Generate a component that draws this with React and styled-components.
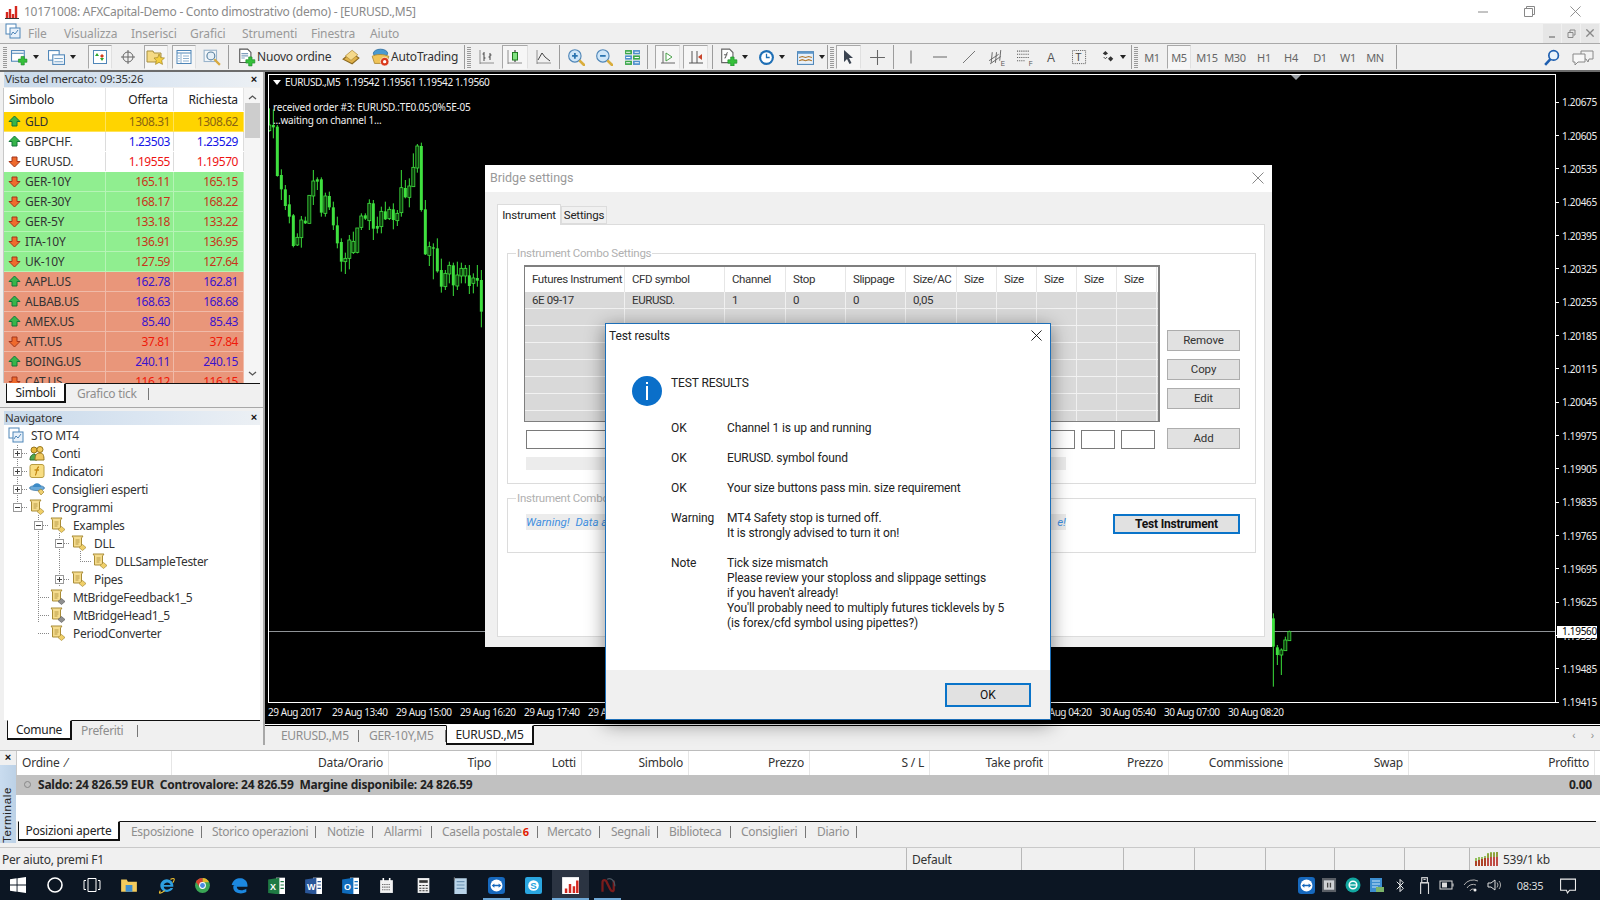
import React from "react";
import styled, { createGlobalStyle } from "styled-components";

const UI = `"Noto Sans", "Liberation Sans", sans-serif`;
const NARROW = `Roboto, "Liberation Sans", sans-serif`;

const GlobalStyle = createGlobalStyle`
  html, body { margin: 0; padding: 0; width: 1600px; height: 900px; overflow: hidden; background: #f0f0f0; }
  * { box-sizing: border-box; }
`;

const App = styled.div`
  position: relative; width: 1600px; height: 900px; overflow: hidden;
  display: flex; flex-direction: column; background: #f0f0f0;
  font-family: ${UI}; font-size: 12px; color: #222;
`;

/* ---------- title + menu ---------- */
const TitleBar = styled.div`
  height: 23px; flex: none; background: #fff; display: flex; align-items: center; padding: 0 2px 0 5px;
`;
const TitleText = styled.div`
  margin-left: 5px; font-size: 12px; color: #8a8a8a; flex: 1; white-space: nowrap; letter-spacing: -.25px;
`;
const WinCtl = styled.div`
  width: 46px; height: 23px; display: flex; align-items: center; justify-content: center; color: #8a8a8a;
`;
const MenuBar = styled.div`
  height: 20px; flex: none; background: #f0f0f0; display: flex; align-items: center; padding-left: 5px; color: #999;
`;
const MenuItem = styled.span`
  width: ${p => p.$w}px; flex: none; font-size: 12px; white-space: nowrap; letter-spacing: -.1px;
`;
const MdiGroup = styled.div`
  margin-left: auto; margin-right: 1px; display: flex; gap: 1px;
`;
const MdiBtn = styled.div`
  width: 18px; height: 19px; background: #e6e6e6; display: flex; align-items: center; justify-content: center; color: #888;
`;

/* ---------- toolbar ---------- */
const Toolbar = styled.div`
  height: 29px; flex: none; display: flex; align-items: center; background: #f0f0f0;
  border-top: 1px solid #a9a9a9; border-bottom: 2px solid #6c6c6c;
`;
const Tool = styled.div`
  width: ${p => p.$w}px; margin-left: ${p => p.$m || 0}px; height: 24px; flex: none;
  display: flex; align-items: center; justify-content: center;
  border: 1px solid ${p => (p.$on ? "#a8a8a8" : "transparent")};
  border-bottom-color: ${p => (p.$on ? "#f7f7f7" : "transparent")};
  border-right-color: ${p => (p.$on ? "#e0e0e0" : "transparent")};
  background: ${p => (p.$on ? "#f6f6f6" : "transparent")};
  font-size: 12px; color: #555; white-space: nowrap;
`;
const ToolLabel = styled.div`
  width: ${p => p.$w}px; flex: none; font-size: 12px; color: #333; white-space: nowrap; letter-spacing: -.2px; padding-bottom: 1px;
`;
const ToolSep = styled.div`
  width: 1px; height: 24px; background: #9c9c9c; flex: none; margin-left: ${p => p.$m || 0}px;
`;
const Grip = styled.div`
  width: 4px; height: 21px; flex: none; margin-left: ${p => p.$m || 0}px;
  background-image: repeating-linear-gradient(to bottom, #9a9a9a 0 1px, transparent 1px 2px);
`;
const Caret = styled.div`
  width: ${p => p.$w}px; flex: none; display: flex; justify-content: center;
  &::after { content: ""; border: 3px solid transparent; border-top: 4px solid #222; border-bottom: 0; }
`;
const ToolRight = styled.div`
  margin-left: auto; display: flex; align-items: center; gap: 12px; padding-right: 6px;
`;
const TfBtn = styled(Tool)`
  font-size: 11px; color: #666; letter-spacing: -.3px;
`;

/* ---------- main ---------- */
const Main = styled.div`
  height: 673px; flex: none; display: flex;
`;
const LeftPanel = styled.div`
  width: 265px; flex: none; background: #f0f0f0; display: flex; flex-direction: column; border-right: 2px solid #a8a8a8;
`;
const PaneTitle = styled.div`
  height: ${p => p.$h}px; margin-left: 4px; margin-right: 3px; display: flex; align-items: center; justify-content: space-between;
  padding: 0 3px 2px 1px; font-size: 11.5px; color: #333; letter-spacing: -.25px;
  background: linear-gradient(to right, #c8d9ea, #dde7f2 60%, #ecf0f4);
`;
const CloseX = styled.span`
  font: bold 11px "Liberation Sans", sans-serif; color: #111;
`;
const Market = styled.div`
  height: 336px; flex: none; display: flex; flex-direction: column; border-bottom: 1px solid #a8a8a8;
`;
const MarketBody = styled.div`
  margin: 1px 3px 0 3px; height: 295px; display: flex; overflow: hidden; background: #fff; border-left: 1px solid #c8c8c8;
`;
const MarketGrid = styled.div`
  width: 240px; flex: none; display: flex; flex-direction: column;
`;
const MRow = styled.div`
  flex: none; display: grid; grid-template-columns: 102px 68px 70px; height: ${p => p.$h}px; align-items: center;
  background: ${p => p.$bg}; border-bottom: 1px solid rgba(255,255,255,.35);
`;
const MHead = styled.div`
  height: 100%; display: flex; align-items: center; justify-content: ${p => (p.$r ? "flex-end" : "flex-start")};
  padding: 0 5px; border-right: 1px solid #e4e4e4; font-size: 12px; color: #222; letter-spacing: -.1px;
`;
const MSym = styled.div`
  display: flex; align-items: center; gap: 4px; padding-left: 4px; font-size: 12px; color: #333; height: 100%; letter-spacing: -.2px;
  border-right: 1px solid ${p => (p.$plain ? "#dcdcdc" : "rgba(255,255,255,.35)")};
`;
const MNum = styled.div`
  text-align: right; padding-right: 3px; font-size: 12px; color: ${p => p.$c}; height: 100%; line-height: 19px; letter-spacing: -.45px;
  border-right: 1px solid ${p => (p.$plain ? "#dcdcdc" : "rgba(255,255,255,.35)")};
  &:last-child { padding-right: 5px; }
`;
const VScroll = styled.div`
  width: 17px; flex: none; background: #f5f5f5; display: flex; flex-direction: column; align-items: center; justify-content: space-between; padding-top: 5px; padding-bottom: 5px; height: 295px; color: #555;
`;
const VThumb = styled.div`
  width: 15px; height: 35px; background: #cdcdcd; margin-top: 1px; margin-bottom: auto;
`;
const BottomTabs = styled.div`
  height: ${p => p.$h || 20}px; flex: none; display: flex; align-items: stretch; margin-left: ${p => p.$ml || 0}px;
  margin-right: ${p => p.$mr || 0}px; border-top: 1px solid #111; background: #f0f0f0;
`;
const ActiveTab = styled.div`
  width: ${p => p.$w}px; flex: none; display: flex; align-items: center; justify-content: center; background: #fff; margin-top: -1px;
  border-left: 1px solid #111; border-right: 2px solid #111; border-bottom: 2px solid #111; border-top: 1px solid #fff;
  font-size: 12px; color: #222; white-space: nowrap; letter-spacing: -.25px;
`;
const SoftTab = styled.div`
  width: ${p => p.$w}px; flex: none; position: relative; display: flex; align-items: center; padding-left: ${p => p.$pl ?? 9}px;
  font-size: 12px; color: #8e8e8e; white-space: nowrap; letter-spacing: -.3px;
  &::after { content: ""; position: absolute; right: 0; top: 4px; bottom: 3px; width: 1px; background: #777; }
`;
const MailBadge = styled.sub`
  color: #e02000; font-size: 11px; font-weight: bold; margin-left: 1px; vertical-align: -5px; line-height: 0;
`;
const Navigator = styled.div`
  flex: 1; display: flex; flex-direction: column; padding-top: 3px; min-height: 0;
`;
const Tree = styled.div`
  position: relative; height: 295px; flex: none; background: #fff; margin-left: 4px; margin-right: 3px; padding-top: 1px;
`;
const TreeRow = styled.div`
  height: 18px; display: flex; align-items: center; padding-left: ${p => p.$pl}px; font-size: 12px; color: #333; white-space: nowrap; letter-spacing: -.3px;
`;
const Expander = styled.span`
  width: 9px; height: 9px; flex: none; border: 1px solid #9a9a9a; position: relative; background: #fff; z-index: 1;
  &::before { content: ""; position: absolute; left: 1px; right: 1px; top: 3px; height: 1px; background: #444; }
  &::after { content: ""; position: absolute; top: 1px; bottom: 1px; left: 3px; width: 1px; background: #444; display: ${p => (p.$open ? "none" : "block")}; }
`;
const HDots = styled.span`
  width: ${p => p.$w}px; flex: none; height: 1px; margin-right: 1px;
  background-image: repeating-linear-gradient(to right, #888 0 1px, transparent 1px 2px);
`;
const VDots = styled.span`
  position: absolute; left: ${p => p.$x}px; top: ${p => p.$y}px; height: ${p => p.$h}px; width: 1px;
  background-image: repeating-linear-gradient(to bottom, #888 0 1px, transparent 1px 2px);
`;
const TreeIcon = styled.span`
  width: 16px; height: 16px; flex: none; margin-right: 7px; display: flex;
`;

/* ---------- chart ---------- */
const RightCol = styled.div`
  flex: 1; display: flex; flex-direction: column; min-width: 0;
`;
const Chart = styled.div`
  height: 654px; flex: none; background: #000; padding: 2px 0 0 3px; display: flex; flex-direction: column; color: #fff;
`;
const ChartTop = styled.div`
  height: 629px; flex: none; display: flex;
`;
const Plot = styled.div`
  width: 1288px; flex: none; position: relative; border: 1px solid #fff;
`;
const PlotSvg = styled.svg`
  position: absolute; left: 0; top: 0; width: 100%; height: 100%;
`;
const ChartHeader = styled.div`
  position: absolute; left: 4px; top: 0; display: flex; align-items: center; gap: 4px; font-size: 10px; height: 14px; white-space: nowrap; letter-spacing: -.36px; color: #f4f4f4;
`;
const HeadTri = styled.span`
  border: 4px solid transparent; border-top: 5px solid #fff; border-bottom: 0;
`;
const ChartNotes = styled.div`
  position: absolute; left: 4px; top: 26px; font-size: 10px; line-height: 13px; color: #f0f0f0; white-space: nowrap; letter-spacing: -.2px;
`;
const Axis = styled.div`
  flex: 1; position: relative; padding-top: 11.6px; display: flex; flex-direction: column;
`;
const AxisTick = styled.div`
  height: 33.33px; flex: none; display: flex; align-items: center; font-size: 10px; color: #eee; letter-spacing: -.3px;
  &::before { content: ""; width: 3px; height: 1px; background: #fff; margin-right: 3px; }
`;
const PriceTag = styled.div`
  position: absolute; left: 1px; top: 552px; width: 40px; height: 12px; background: #fff; color: #000; font-size: 10px; line-height: 11px; padding-left: 5px; letter-spacing: -.3px;
`;
const TimeAxis = styled.div`
  height: 21px; flex: none; display: flex; align-items: center; padding-bottom: 4px;
`;
const TimeLabel = styled.div`
  width: 64px; flex: none; font-size: 10px; color: #eee; white-space: nowrap; letter-spacing: -.45px;
`;
const ChartBase = styled.div`
  height: 1px; background: #fff; margin-left: -3px; flex: none;
`;
const ChartStrip = styled.div`
  height: 19px; flex: none; display: flex; align-items: stretch; background: #f0f0f0; padding-left: 5px; position: relative;
`;
const StripArrows = styled.div`
  margin-left: auto; display: flex; gap: 15px; padding-right: 6px; align-items: center; color: #888; font: 10px "Liberation Sans", sans-serif;
`;

/* ---------- terminal ---------- */
const Terminal = styled.div`
  margin-top: 5px; height: 93px; flex: none; display: flex; border-top: 1px solid #bcbcbc;
`;
const TermSide = styled.div`
  width: 16px; flex: none; display: flex; flex-direction: column; align-items: center;
`;
const TermLabel = styled.div`
  margin-top: 2px; flex: 1; width: 16px; writing-mode: vertical-rl; transform: rotate(180deg); text-align: left; padding-left: 1px;
  background: linear-gradient(to left, #c9dcef, #bcd1e6); font: 11.5px "Liberation Sans", sans-serif; letter-spacing: .7px; color: #222; line-height: 15px;
`;
const TermMain = styled.div`
  flex: 1; display: flex; flex-direction: column; min-width: 0;
`;
const TermHead = styled.div`
  height: 24px; flex: none; display: flex; background: #fff; align-items: stretch; border-left: 1px solid #c8c8c8;
`;
const THCell = styled.div`
  width: ${p => p.$w}px; flex: none; display: flex; align-items: center; padding: 0 5px 2px; font-size: 12px; color: #333; letter-spacing: -.2px; white-space: pre;
  justify-content: ${p => (p.$left ? "flex-start" : "flex-end")}; border-right: 1px solid #e6e6e6;
`;
const Balance = styled.div`
  height: 20px; flex: none; background: #c1c1c1; display: flex; align-items: center; padding: 0 8px 2px 8px; font-weight: 700; font-size: 12px; color: #222; letter-spacing: -.22px; white-space: pre;
`;
const BalDot = styled.span`
  width: 7px; height: 7px; border-radius: 50%; border: 1px solid #888; margin-right: 7px; flex: none;
`;
const BalEnd = styled.span`
  margin-left: auto;
`;
const TermWhite = styled.div`
  height: 26px; flex: none; background: #fff;
`;
const StatusBar = styled.div`
  margin-top: 4px; height: 23px; flex: none; display: flex; background: #f0f0f0; align-items: stretch; border-top: 1px solid #c9c9c9;
`;
const SCell = styled.div`
  width: ${p => p.$w}px; flex: none; display: flex; align-items: center; padding-left: ${p => p.$pl ?? 5}px; gap: 4px;
  border-right: ${p => (p.$nb ? "none" : "1px solid #b8b8b8")}; font-size: 12px; color: #333; white-space: nowrap; letter-spacing: -.25px;
`;

/* ---------- taskbar ---------- */
const Taskbar = styled.div`
  height: 30px; flex: none; background: #0c1623; display: flex; align-items: stretch; color: #fff;
`;
const TaskSlot = styled.div`
  width: 36.8px; flex: none; display: flex; align-items: center; justify-content: center; position: relative;
  background: ${p => (p.$active ? "#2b3442" : "transparent")};
  &::after { content: ""; position: absolute; left: ${p => (p.$active ? 0 : 5)}px; right: ${p => (p.$active ? 0 : 5)}px; bottom: 0; height: 2px;
    background: ${p => (p.$run ? "#6fa8d6" : "transparent")}; }
`;
const TrayGroup = styled.div`
  margin-left: auto; display: flex; align-items: center; padding-right: 20px;
`;
const TraySlot = styled.div`
  width: ${p => p.$w || 23.5}px; flex: none; display: flex; align-items: center; justify-content: center;
`;
const Clock = styled.div`
  width: 48px; text-align: center; font-size: 11px; color: #ddd; letter-spacing: -.3px;
`;

/* ---------- dialogs ---------- */
const BridgeWin = styled.div`
  position: absolute; left: 485px; top: 165px; width: 787px; height: 482px; background: #f0f0f0; display: flex; flex-direction: column;
  font-family: ${NARROW};
`;
const BridgeTitle = styled.div`
  height: 27px; flex: none; background: #fff; display: flex; align-items: center; justify-content: space-between; padding: 0 8px 2px 5px; font-size: 12.5px; color: #999;
`;
const BridgeBody = styled.div`
  flex: 1; display: flex; flex-direction: column; padding: 12px 7px 10px 12px; min-height: 0;
`;
const TabRow = styled.div`
  height: 20px; flex: none; display: flex; align-items: flex-end;
`;
const DlgTab = styled.div`
  width: ${p => p.$w}px; height: ${p => (p.$on ? 21 : 18)}px; flex: none; display: flex; align-items: center; justify-content: center;
  font-size: 11.5px; letter-spacing: -.2px; color: #222; background: ${p => (p.$on ? "#fff" : "#f0f0f0")};
  border: 1px solid #dcdcdc; border-bottom: ${p => (p.$on ? "none" : "1px solid #dcdcdc")}; position: relative; z-index: 1; margin-bottom: ${p => (p.$on ? -1 : 0)}px;
`;
const TabPanel = styled.div`
  flex: 1; background: #fff; border: 1px solid #dcdcdc; padding: 28px 8px 0 9px; display: flex; flex-direction: column; gap: 14px; min-height: 0;
`;
const Group = styled.div`
  position: relative; height: ${p => p.$h}px; flex: none; border: 1px solid #dcdcdc;
`;
const GroupLabel = styled.span`
  position: absolute; left: 8px; top: -7px; background: #fff; padding: 0 1px; font-size: 11.5px; letter-spacing: -.25px; line-height: 13px; color: #b0b0b0;
`;
const ComboGrid = styled.div`
  padding: 11px 0 0 16px; display: grid; grid-template-columns: 636px 73px; column-gap: 7px; align-items: start;
`;
const Table = styled.div`
  height: 157px; border: 1px solid #7f7f7f; border-top-width: 2px; border-right-width: 2px; background: #d9d9d9; overflow: hidden;
`;
const TableRow = styled.div`
  display: grid; grid-template-columns: 100px 100px 61px 60px 60px 51px 40px 40px 40px 40px 40px; height: ${p => p.$h}px;
  background: ${p => (p.$head ? "#fff" : "#d9d9d9")}; border-bottom: ${p => (p.$head ? "none" : "1px solid #f2f2f2")};
`;
const Cell = styled.div`
  padding-left: 7px; padding-bottom: ${p => (p.$head ? 2 : 0)}px; display: flex; align-items: center; font-size: 11.5px; letter-spacing: -.38px; color: #333; white-space: nowrap;
  border-right: 1px solid ${p => (p.$head ? "#e6e6e6" : "#f0f0f0")}; overflow: hidden;
`;
const BtnCol = styled.div`
  padding-top: 65px; display: flex; flex-direction: column; gap: 8px;
`;
const PlainBtn = styled.div`
  height: 21px; background: #e1e1e1; border: 1px solid #adadad; display: flex; align-items: center; justify-content: center; padding-bottom: 1px; font-size: 11.5px; letter-spacing: -.1px; color: #333;
`;
const Inputs = styled.div`
  margin-top: 8px; padding-left: 2px; display: flex; gap: 6px;
`;
const Input = styled.div`
  width: ${p => p.$w}px; height: 19px; flex: none; background: #fff; border: 1px solid #7a7a7a;
`;
const AddBtn = styled(PlainBtn)`
  margin-top: 6px;
`;
const GrayBar = styled.div`
  grid-column: 1; margin: 8px 0 0 2px; width: 540px; height: 13px; background: #ececec;
`;
const Warn = styled.div`
  width: 540px; height: 16px; background: #ececec; color: #3f8fe0; font-style: italic; font-size: 11.5px; display: flex; align-items: center; justify-content: space-between; white-space: nowrap;
`;
const WarnRow = styled.div`
  height: 100%; display: flex; align-items: flex-start; justify-content: space-between; padding: 15px 15px 0 18px;
`;
const BlueBtn = styled.div`
  width: ${p => p.$w}px; height: ${p => p.$h}px; flex: none; background: #e1e1e1; border: 2px solid #0a74c9; display: flex; align-items: center; justify-content: center; padding-bottom: 1px;
  font-size: 12px; color: #111; font-weight: ${p => (p.$bold ? 700 : 400)}; letter-spacing: ${p => (p.$bold ? "-.2px" : "0")};
`;
const TestWin = styled.div`
  position: absolute; left: 605px; top: 323px; width: 446px; height: 397px; background: #fff; border: 1px solid #1d6fb8; display: flex; flex-direction: column;
  font-family: ${NARROW}; font-size: 12px; letter-spacing: -.12px; color: #222; box-shadow: 0 4px 18px rgba(0,0,0,.45);
`;
const TestTitle = styled.div`
  height: 26px; flex: none; display: flex; align-items: center; justify-content: space-between; padding: 0 8px 3px 3px; font-size: 12px; color: #222;
`;
const TestBody = styled.div`
  flex: 1; display: flex; padding: 26px 0 0 26px; min-height: 0;
`;
const InfoCircle = styled.div`
  position: relative; width: 30px; height: 30px; flex: none; border-radius: 50%; background: #0a6fc9; margin-right: 9px;
  &::before { content: ""; position: absolute; left: 14px; top: 6px; width: 1.5px; height: 2px; background: #fff; }
  &::after { content: ""; position: absolute; left: 14px; top: 10px; width: 1.5px; height: 14px; background: #fff; }
`;
const Heading = styled.div`
  line-height: 15px; margin-bottom: 30px;
`;
const ResultRow = styled.div`
  display: grid; grid-template-columns: 56px 1fr; line-height: 15px; margin-bottom: 15px; white-space: pre-line;
`;
const TestFooter = styled.div`
  height: 49px; flex: none; background: #f0f0f0; display: flex; justify-content: flex-end; padding: 13px 19px 0 0;
`;

/* ---------- icons ---------- */
const Svg = ({ s = 16, w, h, children, vb = "0 0 16 16" }) => (
  <svg width={w || s} height={h || s} viewBox={vb} fill="none">{children}</svg>
);
const BLUE = "#4f86b8";
const PlusG = ({ x = 9, y = 9 }) => (
  <path d={`M${x - 1.5} ${y - 4}h3v2.5h2.5v3h-2.5v2.5h-3v-2.5h-2.5v-3h2.5z`} fill="#35c03a" stroke="#1d8a2a" strokeWidth=".6" />
);
const I = {
  mt: () => <Svg s={14} vb="0 0 14 14"><path d="M2 13V7M5 13V4M8 13V9M11 13V1" stroke="#d5281f" strokeWidth="2.4" /><path d="M0 13.5H14" stroke="#333" /></Svg>,
  app: () => <Svg><rect x="1" y="1" width="10" height="10" stroke={BLUE} fill="#fff" /><rect x="5" y="5" width="10" height="10" stroke={BLUE} fill="#e8f1fa" /><path d="M6 12l2-3 2 2 3-4" stroke={BLUE} /></Svg>,
  newChart: () => <Svg w={17} h={17}><rect x=".5" y="1.5" width="12" height="10" fill="#fff" stroke={BLUE} /><path d="M1 4h11" stroke={BLUE} /><PlusG x={11} y={11} /></Svg>,
  profile: () => <Svg w={17} h={17}><rect x=".5" y="1.5" width="10" height="9" fill="#fff" stroke={BLUE} /><rect x="4.5" y="5.5" width="11" height="9" fill="#f6f9fc" stroke={BLUE} /><path d="M6 9h8M6 12h8" stroke="#7aa5c9" /></Svg>,
  market: () => <Svg><rect x="1.5" y="1.5" width="13" height="13" fill="#fff" stroke={BLUE} /><path d="M5 4l2 3H3zM10 12l-2-3h4z" fill="#2aa52a" /><path d="M10 5l2 2-2 2-2-2z" fill="#d43c1c" /></Svg>,
  target: () => <Svg><circle cx="8" cy="8" r="5" stroke="#666" /><path d="M8 1v14M1 8h14" stroke="#666" /></Svg>,
  folderStar: () => <Svg w={20} h={18} vb="0 0 20 18"><path d="M1 3h6l1 2h7v9H1z" fill="#f5da84" stroke="#a89040" /><path d="M13 6l1.7 3.6 3.8.4-2.8 2.6.8 3.8-3.5-2-3.5 2 .8-3.8L8 10l3.8-.4z" fill="#f4cf3e" stroke="#a3872a" strokeWidth=".7" /></Svg>,
  terminal: () => <Svg><rect x="1" y="1.5" width="14" height="13" fill="#fff" stroke={BLUE} /><path d="M1 4h14" stroke={BLUE} /><path d="M5 4v10M7 7h6M7 9.5h6M7 12h6" stroke="#8db0cf" /><path d="M2.5 7h1M2.5 9.5h1M2.5 12h1" stroke={BLUE} /></Svg>,
  tester: () => <Svg w={18} h={18}><rect x="1" y="2" width="11" height="10" fill="#f4f7fa" stroke="#9ab4cb" /><circle cx="7" cy="7" r="3.5" stroke="#58809f" fill="#e6f0f8" /><path d="M10 10l5 5" stroke="#d8a93e" strokeWidth="2" /></Svg>,
  order: () => <Svg w={18} h={19} vb="0 0 16 17"><path d="M1.5 1h7l3 3v9h-10z" fill="#fff" stroke="#555" /><path d="M3 5h6M3 7h6M3 9h3" stroke="#7f9fbd" /><PlusG x={11} y={12} /></Svg>,
  editor: () => <Svg w={18} h={18}><path d="M1 10l7-6 7 5-6 5z" fill="#e0b24a" stroke="#8c6a20" /><path d="M3 7l6-5 5 4-6 5z" fill="#f5d98a" stroke="#a98530" strokeWidth=".6" /></Svg>,
  auto: () => <Svg w={19} h={19}><ellipse cx="8" cy="4.5" rx="6" ry="3.5" fill="#4b9ad0" stroke="#2c6a9c" strokeWidth=".7" /><path d="M1 7c3-2 10-2 14 0l-2 6H3z" fill="#f0c458" stroke="#a98530" strokeWidth=".7" /><circle cx="11.5" cy="11.5" r="3.6" fill="#d93a1d" stroke="#fff" strokeWidth=".5" /><circle cx="11.5" cy="11.5" r="1.4" fill="#fff" /></Svg>,
  bars: () => <Svg><path d="M1 14h14M1 1v14" stroke="#777" strokeWidth=".8" /><path d="M5 3v9M3.5 5H5M5 9h1.5M11 4v7M9.5 8H11M11 6h1.5" stroke="#444" /></Svg>,
  candles: () => <Svg><path d="M1 14h14M1 1v14" stroke="#777" strokeWidth=".8" /><path d="M8 1v3M8 11v2" stroke="#222" /><rect x="5.5" y="3.5" width="5" height="7.5" fill="#7fe27f" stroke="#1f7a1f" /></Svg>,
  line: () => <Svg><path d="M1 14h14M1 1v14" stroke="#777" strokeWidth=".8" /><path d="M2 11l4-7 3 4 5 4" stroke="#444" /></Svg>,
  zoomIn: () => <Svg w={18} h={18}><circle cx="7" cy="7" r="5.5" fill="#cfe6f8" stroke="#4f86b8" /><path d="M4.5 7h5M7 4.5v5" stroke="#2b74b0" strokeWidth="1.6" /><path d="M11 11l5 5" stroke="#d9ad3c" strokeWidth="2.4" /></Svg>,
  zoomOut: () => <Svg w={18} h={18}><circle cx="7" cy="7" r="5.5" fill="#cfe6f8" stroke="#4f86b8" /><path d="M4.5 7h5" stroke="#2b74b0" strokeWidth="1.6" /><path d="M11 11l5 5" stroke="#d9ad3c" strokeWidth="2.4" /></Svg>,
  tile: () => <Svg w={17} h={17}><path d="M1 1h6.500v4H1z" fill="#3aa74a" /><path d="M8.500 1H15v4H8.500z" fill="#4d8fcc" /><path d="M1 6h6.500v4H1z" fill="#4d8fcc" /><path d="M8.500 6H15v4H8.500z" fill="#3aa74a" /><path d="M1 11h6.500v4H1z" fill="#3aa74a" /><path d="M8.500 11H15v4H8.500z" fill="#4d8fcc" /><path d="M2 3h4M10 8h4M2 13h4M10 13h4M2 8h4M10 3h4" stroke="#fff" /></Svg>,
  shift: () => <Svg><path d="M1 14h14M3 2v12" stroke="#666" /><path d="M6 4l6 4-6 4z" fill="#fff" stroke="#4aa14a" /></Svg>,
  scroll: () => <Svg><path d="M1 14h14M4 2v12M9 2v12" stroke="#555" /><path d="M14 5l-4 3 4 3z" fill="#c8452c" /></Svg>,
  indicator: () => <Svg w={18} h={18}><path d="M1.5 1h7l3 3v9h-10z" fill="#fff" stroke="#666" /><path d="M4 9c2 0 1-5 3-5M3.500 6h3" stroke="#666" /><PlusG x={11} y={12} /></Svg>,
  clock: () => <Svg w={17} h={17}><circle cx="8" cy="8" r="7" fill="#1f6fb5" /><circle cx="8" cy="8" r="5" fill="#fff" /><path d="M8 4.500V8h3" stroke="#1f6fb5" strokeWidth="1.2" /></Svg>,
  template: () => <Svg w={19} h={17}><rect x=".5" y="2.5" width="15" height="12" fill="#e7f1fa" stroke={BLUE} /><path d="M.5 2.500h15v2H.5z" fill="#5d97c9" /><path d="M2 8l3-1 3 1 3-1 3 1M2 11l3-1 3 1 3-1 3 1" stroke="#b0752a" /></Svg>,
  cursor: () => <Svg><path d="M3 1l9 8H8l2.500 5-2 1L6 10l-3 3z" fill="#3a4350" /></Svg>,
  cross: () => <Svg w={17} h={17}><path d="M8 1v14M1 8h14" stroke="#666" /></Svg>,
  vline: () => <Svg><path d="M8 1.500v13" stroke="#666" /></Svg>,
  hline: () => <Svg w={14} h={14} vb="0 0 14 14"><path d="M0 7h14" stroke="#666" /></Svg>,
  trend: () => <Svg><path d="M2 14L14 2" stroke="#777" /></Svg>,
  fibE: () => <Svg w={17} h={17}><path d="M1 11l9-6M2 14l10-7M4 3l-1 10M8 3L7 13M12 1l-1 10" stroke="#666" strokeWidth=".9" /><text x="12" y="16" fontSize="6" fill="#555" fontFamily="Liberation Sans">E</text></Svg>,
  fibF: () => <Svg w={17} h={17}><path d="M1 2h12M1 5h12M1 8h12M1 11h8" stroke="#555" strokeDasharray="1 1" /><text x="12" y="16" fontSize="6" fill="#555" fontFamily="Liberation Sans">F</text></Svg>,
  a: () => <Svg><text x="3" y="13" fontSize="12" fill="#555" fontFamily="Liberation Sans">A</text></Svg>,
  t: () => <Svg w={15} h={15}><rect x=".5" y=".5" width="14" height="14" stroke="#555" strokeDasharray="1 1" /><text x="3.5" y="12" fontSize="11" fill="#444" fontFamily="Liberation Sans">T</text></Svg>,
  arrows: () => <Svg w={14} h={14}><path d="M5 1l3 3-3 2-3-2zM11 7l3 3-3 3-3-3z" fill="#333" /><path d="M3 8l2 2 2-2" stroke="#333" /></Svg>,
  search: () => <Svg s={17}><circle cx="10" cy="6" r="4.500" stroke="#1e5fb0" strokeWidth="1.6" fill="#eaf3fb" /><path d="M7 9.500L2 15" stroke="#1e5fb0" strokeWidth="2.4" /></Svg>,
  chat: () => <Svg w={22} h={17} vb="0 0 22 17"><path d="M9 2h12v8H17l-1 3-2-3H9z" fill="#f3f3f3" stroke="#888" /><path d="M1 5h12v8H6l-3 3v-3H1z" fill="#f8f8f8" stroke="#888" /></Svg>,
  up: () => <Svg s={13} vb="0 0 13 13"><path d="M6.500 1L12 6.500H9V11H4V6.500H1z" fill="#37b54a" stroke="#12763a" strokeWidth="1" /></Svg>,
  down: () => <Svg s={13} vb="0 0 13 13"><path d="M6.500 12L1 6.500h3V2h5v4.500h3z" fill="#ef6a2c" stroke="#a2351a" strokeWidth="1" /></Svg>,
  accounts: () => <Svg><circle cx="5" cy="5" r="3" fill="#e8b83c" stroke="#96761c" /><circle cx="11" cy="4.500" r="3" fill="#f2cb5e" stroke="#96761c" /><path d="M1 15c0-5 3-6 5-6l2 6z" fill="#4fa84f" stroke="#2c6b2c" /><path d="M6 15c0-6 2-7 5-7s4 2 4 7z" fill="#f0c860" stroke="#96761c" /></Svg>,
  indicators: () => <Svg><rect x="1" y="1.500" width="14" height="13" rx="2" fill="#f8dd82" stroke="#b89c40" /><path d="M6 12c2 0 1-8 4-8M5.500 7H10" stroke="#c48a16" strokeWidth="1.3" /></Svg>,
  experts: () => <Svg><ellipse cx="8" cy="7" rx="7.500" ry="2.600" fill="#6aa9d8" stroke="#35709f" strokeWidth=".7" /><path d="M4 6c0-5 8-5 8 0z" fill="#3d8bc7" /><path d="M9 10l3-2 3 3-3 3z" fill="#f0d070" stroke="#a08530" strokeWidth=".7" /></Svg>,
  script: ({ gray }) => <Svg><path d="M1 1h11l-1.500 2v9h-8V3z" fill="#f5dc8e" stroke="#a98c36" /><path d="M4.500 5h4M4.500 7h4M4.500 9h3" stroke="#a98c36" strokeWidth=".8" /><path d="M11.500 9.500l3.500 3-3.500 3-3.500-3z" fill={gray ? "#8f8f8f" : "#f0cf68"} stroke={gray ? "#5f5f5f" : "#a98c36"} strokeWidth=".7" /></Svg>,
  x: ({ s = 12, c = "#888", sw = 1 }) => <Svg s={s} vb="0 0 12 12"><path d="M.5.5l11 11M11.500.5l-11 11" stroke={c} strokeWidth={sw} /></Svg>,
  win: () => <Svg s={16}><path d="M0 2.300l6.600-1v6.300H0zM7.500 1.200L16 0v7.600H7.500zM0 8.400h6.600v6.300l-6.600-1zM7.500 8.400H16V16l-8.500-1.200z" fill="#fff" /></Svg>,
  circle: () => <Svg s={16}><circle cx="8" cy="8" r="7" stroke="#fff" strokeWidth="1.6" /></Svg>,
  view: () => <Svg s={18} vb="0 0 18 16"><path d="M5 1.500h8v13H5zM1 3.500h2M1 3.500v9M1 12.500h2M17 3.500h-2M17 3.500v9M17 12.500h-2" stroke="#fff" /></Svg>,
  folder: () => <Svg s={18}><path d="M1 3h5l1 2h8v9H1z" fill="#f4cb5c" /><path d="M5 8h6v6H5z" fill="#3f8fd0" /></Svg>,
  ie: () => <Svg s={18}><path d="M14.500 9.500H6c.3 3 4 3.500 6 1.200h2.300C12.600 15 6 15.400 3.600 11 1.500 7 5 2.500 9.500 3c3.500.4 5.300 3 5 6.500zM6 8h6c-.3-3-5.300-3.200-6 0z" fill="#2e9fe0" /><path d="M3 13c-2 3 0 3 4 0M12 3c4-2 4 0 2 3" stroke="#f0c030" /></Svg>,
  chrome: () => <Svg s={17}><circle cx="8" cy="8" r="7" fill="#3aa655" /><path d="M8 1a7 7 0 0 1 6.200 4H8z" fill="#e6b62a" /><path d="M1.800 4.800A7 7 0 0 1 8 1v4L5 9z" fill="#d8402f" /><circle cx="8" cy="8" r="3.200" fill="#fff" /><circle cx="8" cy="8" r="2.300" fill="#4a8be0" /></Svg>,
  edge: () => <Svg s={18}><path d="M1.500 8C2.500 3 7 1.500 10 2c4 .6 6 4 5.500 7.500H6c.2 3.500 5 4 8.500 1.800v3C10 17 2 15.500 3 9c1-3 6-4.500 7-.8H6" fill="#1c88e0" /></Svg>,
  office: ({ bg, l }) => <Svg s={18}><path d="M8 1.500h8.500v15H8z" fill="#fff" /><path d="M1 3l10-1.500v15L1 15z" fill={bg} /><text x="2.600" y="12" fontSize="8" fontWeight="700" fill="#fff" fontFamily="Liberation Sans">{l}</text><path d="M12 5h3M12 8h3M12 11h3" stroke={bg} /></Svg>,
  calendar: () => <Svg s={17}><rect x="2" y="3" width="12" height="12" fill="#f2f2f2" /><path d="M5 1v3M11 1v3" stroke="#fff" strokeWidth="1.5" /><path d="M4 7h8M4 9.500h8M4 12h8" stroke="#444" strokeDasharray="1 1" /></Svg>,
  calc: () => <Svg s={17}><rect x="2.500" y="1" width="11" height="14" fill="#f0f0f0" /><path d="M4 3h8v2.500H4z" fill="#333" /><path d="M4 8h8M4 10.500h8M4 13h8" stroke="#333" strokeDasharray="2 1" /></Svg>,
  note: () => <Svg s={18}><path d="M3 2h11v14H3z" fill="#b9d4e9" /><path d="M5 5h7M5 8h7M5 11h7" stroke="#6d93b3" /><path d="M3 1v3" stroke="#777" /></Svg>,
  tv: () => <Svg s={17}><rect x="0" y="0" width="16" height="16" rx="3" fill="#1668bd" /><circle cx="8" cy="8" r="5.600" fill="#fff" /><path d="M3.500 8l2.500-2v1.300h4V6L12.500 8 10 10V8.700H6V10z" fill="#1668bd" /></Svg>,
  skype: () => <Svg s={17}><rect width="16" height="16" rx="2" fill="#2aa6e0" /><circle cx="8" cy="8" r="5" fill="#fff" /><text x="5" y="11.500" fontSize="9" fontWeight="700" fill="#2aa6e0" fontFamily="Liberation Sans">S</text></Svg>,
  mtTask: () => <Svg s={18}><rect x="1" y="1" width="16" height="16" fill="#fff" /><path d="M4.500 15V11M8 15V7M11.500 15V9M14.500 15V4" stroke="#d32820" strokeWidth="2.200" /></Svg>,
  nin: () => <Svg s={18}><path d="M4 14V6c0-3 3-3 4 0l3 6c1 2 3 2 3 0V4" stroke="#7a1c1c" strokeWidth="2" /><path d="M8 3c3-2 7 1 7 6" stroke="#4a5560" /></Svg>,
  pause: () => <Svg s={15}><rect width="15" height="15" fill="#5a5f66" /><rect x="2" y="2.500" width="11" height="10" fill="#cfd2d6" /><path d="M6 5v5M9 5v5" stroke="#444" strokeWidth="1.400" /></Svg>,
  eset: () => <Svg s={16}><circle cx="8" cy="8" r="7.500" fill="#12a7a0" /><circle cx="8" cy="8" r="3.800" stroke="#fff" strokeWidth="1.500" /><path d="M4.500 8h7" stroke="#fff" strokeWidth="1.200" /></Svg>,
  net: () => <Svg s={16}><rect x="1" y="1" width="12" height="14" fill="#3c8ed0" /><path d="M3 4h8M3 7h8M3 10h6" stroke="#c8e6fa" /><rect x="7" y="10" width="8" height="5" fill="#7bb46a" /></Svg>,
  bt: () => <Svg s={15}><path d="M4 4l7 7-3.500 3.500v-13L11 5l-7 7" stroke="#fff" /></Svg>,
  usb: () => <Svg s={18}><rect x="5" y="6" width="7" height="11" stroke="#ddd" /><rect x="6" y="1.500" width="5" height="4.500" stroke="#ddd" /><path d="M7.500 3h2" stroke="#ddd" /></Svg>,
  batt: () => <Svg s={16}><rect x="1" y="4" width="12" height="8" stroke="#ddd" /><path d="M14 6.500v3" stroke="#ddd" /><path d="M3 5.500h5v5H3z" fill="#ddd" /></Svg>,
  wifi: () => <Svg s={16}><path d="M1 8a11 11 0 0 1 14-4M4 11a7 7 0 0 1 9-3M7 14a3 3 0 0 1 5-1" stroke="#b0b0b0" /><circle cx="12" cy="13" r="1.500" fill="#eee" /></Svg>,
  speaker: () => <Svg s={16}><path d="M2 6h3l4-3v10l-4-3H2z" stroke="#ddd" /><path d="M11 5.500a4 4 0 0 1 0 5M13 4a6 6 0 0 1 0 8" stroke="#aaa" /></Svg>,
  notif: () => <Svg s={17}><path d="M1.500 2h14v10.500H10L8 15l-1-2.500H1.500z" stroke="#eee" /></Svg>,
  signal: () => <Svg w={24} h={14} vb="0 0 24 14"><path d="M1 14V6M4 14V5M7 14V5M10 14V4" stroke="#7fb53a" strokeWidth="1.600" /><path d="M1 14V9M4 14V8M7 14V7M10 14V6M13 14V2M16 14V1M19 14V1M22 14V0" stroke="#b4231a" strokeWidth="1.600" /><path d="M13 6V1M16 5V0M19 5V0M22 5V0" stroke="#86b63c" strokeWidth="1.600" /></Svg>,
};

/* ---------- data ---------- */
const GOLD = "#ffd400", GREEN = "#90ee90", SALMON = "#e9967a";
const marketRows = [
  ["GLD", "1308.31", "1308.62", "up", GOLD],
  ["GBPCHF.", "1.23503", "1.23529", "up", "#fff"],
  ["EURUSD.", "1.19555", "1.19570", "down", "#fff"],
  ["GER-10Y", "165.11", "165.15", "down", GREEN],
  ["GER-30Y", "168.17", "168.22", "down", GREEN],
  ["GER-5Y", "133.18", "133.22", "down", GREEN],
  ["ITA-10Y", "136.91", "136.95", "down", GREEN],
  ["UK-10Y", "127.59", "127.64", "down", GREEN],
  ["AAPL.US", "162.78", "162.81", "up", SALMON],
  ["ALBAB.US", "168.63", "168.68", "up", SALMON],
  ["AMEX.US", "85.40", "85.43", "up", SALMON],
  ["ATT.US", "37.81", "37.84", "down", SALMON],
  ["BOING.US", "240.11", "240.15", "up", SALMON],
  ["CAT.US", "116.12", "116.15", "down", SALMON],
];
const numColor = (dir, bg) => {
  if (bg === GOLD) return "#8a6512";
  if (bg === "#fff") return dir === "up" ? "#1414e6" : "#ee1414";
  if (bg === GREEN) return "#c8341a";
  return dir === "up" ? "#3a14cc" : "#ef1a0a";
};
/* [x in zoom px, high, low, bodyTop, bodyBottom, filled] */
const candles = [
  [4,115,185,165,182,0],[16,118,205,165,172,1],[28,165,320,170,318,1],[40,298,390,315,358,1],[52,345,420,358,408,1],
  [64,375,460,403,440,1],[76,432,532,436,528,1],[88,490,528,502,525,0],[100,438,533,450,503,0],[112,440,462,452,460,1],
  [124,376,460,376,460,0],[136,300,405,333,378,0],[148,322,360,328,335,1],[160,322,440,328,428,1],[172,368,440,378,430,0],
  [184,365,420,378,412,1],[196,395,480,412,466,1],[208,440,535,466,520,1],[220,505,605,516,575,1],[232,548,612,565,575,0],
  [244,495,598,510,565,0],[256,485,552,514,548,0],[268,474,550,474,547,0],[280,430,480,438,472,0],[292,430,450,436,446,1],
  [304,388,480,400,452,0],[316,390,510,400,476,1],[328,440,490,468,476,1],[340,410,490,424,470,0],[352,395,450,424,448,1],
  [364,410,450,418,446,0],[376,400,478,418,450,1],[388,420,468,430,452,0],[400,300,440,353,428,0],[412,330,385,354,382,1],
  [424,325,412,348,382,0],[436,250,350,292,350,0],[448,222,308,228,294,0],[460,218,425,228,420,1],[472,390,555,418,553,1],
  [484,515,588,530,556,0],[496,520,628,532,536,1],[508,505,608,535,604,1],[520,566,668,600,650,1],[532,600,660,610,650,0],
  [544,575,640,586,612,0],[556,578,678,586,646,1],[568,575,660,615,648,0],[580,578,640,595,618,0],[592,585,640,595,618,0],
  [604,585,672,616,648,1],[616,610,670,624,640,0],[628,585,650,624,632,1],[640,600,772,630,725,1],
];
const tailCandles = [[130,100,320,115,200,1],[142,195,255,202,225,1],[154,205,285,210,225,0],[166,170,212,180,212,0],[178,152,182,155,182,0]];
const Candle = ({ x, hi, lo, top, bot, filled }) => (
  <g>
    <path d={`M${x} ${hi}V${lo}`} stroke="#3ae03a" strokeWidth="1" />
    <rect x={x - 1.5} y={top} width="3" height={Math.max(bot - top, 1)} fill={filled ? "#3fe03f" : "#0b3a0b"} stroke={filled ? "none" : "#3fe03f"} strokeWidth=".8" />
  </g>
);
const ticks = ["1.20675","1.20605","1.20535","1.20465","1.20395","1.20325","1.20255","1.20185","1.20115","1.20045","1.19975","1.19905","1.19835","1.19765","1.19695","1.19625","1.19555","1.19485","1.19415"];
const times = ["29 Aug 2017","29 Aug 13:40","29 Aug 15:00","29 Aug 16:20","29 Aug 17:40","29 Aug 19:00","29 Aug 20:20","29 Aug 21:40","29 Aug 23:00","30 Aug 00:20","30 Aug 01:40","30 Aug 03:00","30 Aug 04:20","30 Aug 05:40","30 Aug 07:00","30 Aug 08:20"];
const termCols = [["Ordine  ⁄",155,1],["Data/Orario",217],["Tipo",108],["Lotti",85],["Simbolo",107],["Prezzo",121],["S / L",120],["Take profit",119],["Prezzo",120],["Commissione",120],["Swap",120],["Profitto",186]];
const termTabs = [["Esposizione",82,11],["Storico operazioni",114,10],["Notizie",57,11],["Allarmi",59,11],["Casella postale",106,10],["Mercato",62,9],["Segnali",58,11],["Biblioteca",73,11],["Consiglieri",75,10],["Diario",51,11]];
const tableCols = ["Futures Instrument","CFD symbol","Channel","Stop","Slippage","Size/AC","Size","Size","Size","Size","Size"];
const firstRow = ["6E 09-17","EURUSD.","1","0","0","0,05","","","","",""];
const inputWidths = [98,93,55,54,54,45,34,34,34,34,34];
const statusCells = [115,102,71,71,69,70,65];

const TreeItem = ({ level, expander, open, icon, children }) => {
  const pl = level === 0 ? 4 : 9 + 21 * (level - 1);
  return (
    <TreeRow $pl={level === 0 || expander ? pl : pl + 4}>
      {expander && <Expander $open={open} />}
      {level > 0 && <HDots $w={expander ? 6 : 11} />}
      <TreeIcon>{icon}</TreeIcon>
      {children}
    </TreeRow>
  );
};

const Tools = () => (
  <Toolbar>
    <Grip $m={3} />
    <Tool $w={23} $m={1}><I.newChart /></Tool><Caret $w={10} />
    <Tool $w={23} $m={4}><I.profile /></Tool><Caret $w={10} />
    <Tool $w={24} $m={10} $on><I.market /></Tool>
    <Tool $w={24} $m={4}><I.target /></Tool>
    <Tool $w={24} $m={4} $on><I.folderStar /></Tool>
    <Tool $w={24} $m={4} $on><I.terminal /></Tool>
    <Tool $w={24} $m={4}><I.tester /></Tool>
    <ToolSep $m={4} />
    <Tool $w={20} $m={8}><I.order /></Tool>
    <ToolLabel $w={83}>Nuovo ordine</ToolLabel>
    <Tool $w={20} $m={1}><I.editor /></Tool>
    <Tool $w={22} $m={8}><I.auto /></Tool>
    <ToolLabel $w={72}>AutoTrading</ToolLabel>
    <ToolSep $m={1} /><Grip $m={2} />
    <Tool $w={20} $m={6}><I.bars /></Tool>
    <Tool $w={26} $m={5} $on><I.candles /></Tool>
    <Tool $w={22} $m={5}><I.line /></Tool>
    <ToolSep $m={4} />
    <Tool $w={22} $m={5}><I.zoomIn /></Tool>
    <Tool $w={22} $m={6}><I.zoomOut /></Tool>
    <Tool $w={22} $m={6}><I.tile /></Tool>
    <ToolSep $m={4} />
    <Tool $w={25} $m={7} $on><I.shift /></Tool>
    <Tool $w={25} $m={3} $on><I.scroll /></Tool>
    <ToolSep $m={4} />
    <Tool $w={22} $m={5}><I.indicator /></Tool><Caret $w={10} />
    <Tool $w={22} $m={5}><I.clock /></Tool><Caret $w={10} />
    <Tool $w={24} $m={6}><I.template /></Tool><Caret $w={9} />
    <ToolSep $m={1} /><Grip $m={2} />
    <Tool $w={25} $m={2} $on><I.cursor /></Tool>
    <Tool $w={24} $m={4}><I.cross /></Tool>
    <ToolSep $m={4} />
    <Tool $w={22} $m={6}><I.vline /></Tool>
    <Tool $w={24} $m={6}><I.hline /></Tool>
    <Tool $w={22} $m={6}><I.trend /></Tool>
    <Tool $w={22} $m={5}><I.fibE /></Tool>
    <Tool $w={22} $m={6}><I.fibF /></Tool>
    <Tool $w={20} $m={7}><I.a /></Tool>
    <Tool $w={20} $m={7}><I.t /></Tool>
    <Tool $w={20} $m={9}><I.arrows /></Tool><Caret $w={9} />
    <ToolSep $m={4} /><Grip $m={2} />
    <TfBtn $w={24} $m={2}>M1</TfBtn>
    <TfBtn $w={24} $m={3} $on>M5</TfBtn>
    <TfBtn $w={28} $m={2}>M15</TfBtn>
    <TfBtn $w={28} $m={0}>M30</TfBtn>
    <TfBtn $w={24} $m={3}>H1</TfBtn>
    <TfBtn $w={24} $m={3}>H4</TfBtn>
    <TfBtn $w={24} $m={5}>D1</TfBtn>
    <TfBtn $w={24} $m={4}>W1</TfBtn>
    <TfBtn $w={24} $m={3}>MN</TfBtn>
    <ToolSep $m={9} />
    <ToolRight><I.search /><I.chat /></ToolRight>
  </Toolbar>
);

export default function Page() {
  return (
    <App>
      <GlobalStyle />
      <TitleBar>
        <I.mt />
        <TitleText>10171008: AFXCapital-Demo - Conto dimostrativo (demo) - [EURUSD.,M5]</TitleText>
        <WinCtl><Svg s={10} vb="0 0 10 10"><path d="M0 5h10" stroke="#888" /></Svg></WinCtl>
        <WinCtl><Svg s={11} vb="0 0 11 11"><path d="M.5 2.500h8v8h-8zM2.500 2.500v-2h8v8h-2" stroke="#888" /></Svg></WinCtl>
        <WinCtl><I.x s={11} /></WinCtl>
      </TitleBar>
      <MenuBar>
        <MenuItem $w={23}><I.app /></MenuItem>
        {[["File",36],["Visualizza",67],["Inserisci",59],["Grafici",52],["Strumenti",69],["Finestra",59],["Aiuto",50]].map(([t, w]) => (
          <MenuItem key={t} $w={w}>{t}</MenuItem>
        ))}
        <MdiGroup>
          <MdiBtn><Svg s={9} vb="0 0 9 9"><path d="M1 8h6" stroke="#888" strokeWidth="1.500" /></Svg></MdiBtn>
          <MdiBtn><Svg s={9} vb="0 0 9 9"><path d="M1 3.500h5v5H1zM3 3V1h5v5H6.500" stroke="#888" /></Svg></MdiBtn>
          <MdiBtn><I.x s={8} sw={2} /></MdiBtn>
        </MdiGroup>
      </MenuBar>
      <Tools />
      <Main>
        <LeftPanel>
          <Market>
            <PaneTitle $h={15}>Vista del mercato: 09:35:26<CloseX>×</CloseX></PaneTitle>
            <MarketBody>
              <MarketGrid>
                <MRow $h={24} $bg="#fff">
                  <MHead>Simbolo</MHead><MHead $r>Offerta</MHead><MHead $r>Richiesta</MHead>
                </MRow>
                {marketRows.map(([s, a, b, dir, bg]) => (
                  <MRow key={s} $h={20} $bg={bg}>
                    <MSym $plain={bg === "#fff"}>{dir === "up" ? <I.up /> : <I.down />}{s}</MSym>
                    <MNum $c={numColor(dir, bg)} $plain={bg === "#fff"}>{a}</MNum>
                    <MNum $c={numColor(dir, bg)} $plain={bg === "#fff"}>{b}</MNum>
                  </MRow>
                ))}
              </MarketGrid>
              <VScroll>
                <Svg s={9} vb="0 0 9 9"><path d="M1 6l3.500-3L8 6" stroke="#555" strokeWidth="1.300" /></Svg>
                <VThumb />
                <Svg s={9} vb="0 0 9 9"><path d="M1 3l3.500 3L8 3" stroke="#555" strokeWidth="1.300" /></Svg>
              </VScroll>
            </MarketBody>
            <BottomTabs $ml={6} $mr={3}>
              <ActiveTab $w={60}>Simboli</ActiveTab>
              <SoftTab $w={83} $pl={11}>Grafico tick</SoftTab>
            </BottomTabs>
          </Market>
          <Navigator>
            <PaneTitle $h={14}>Navigatore<CloseX>×</CloseX></PaneTitle>
            <Tree>
              <VDots $x={13} $y={20} $h={60} />
              <VDots $x={34} $y={90} $h={108} />
              <VDots $x={55} $y={108} $h={54} />
              <VDots $x={76} $y={126} $h={9} />
              <TreeItem level={0} icon={<I.app />}>STO MT4</TreeItem>
              <TreeItem level={1} expander icon={<I.accounts />}>Conti</TreeItem>
              <TreeItem level={1} expander icon={<I.indicators />}>Indicatori</TreeItem>
              <TreeItem level={1} expander icon={<I.experts />}>Consiglieri esperti</TreeItem>
              <TreeItem level={1} expander open icon={<I.script />}>Programmi</TreeItem>
              <TreeItem level={2} expander open icon={<I.script />}>Examples</TreeItem>
              <TreeItem level={3} expander open icon={<I.script />}>DLL</TreeItem>
              <TreeItem level={4} icon={<I.script />}>DLLSampleTester</TreeItem>
              <TreeItem level={3} expander icon={<I.script />}>Pipes</TreeItem>
              <TreeItem level={2} icon={<I.script gray />}>MtBridgeFeedback1_5</TreeItem>
              <TreeItem level={2} icon={<I.script gray />}>MtBridgeHead1_5</TreeItem>
              <TreeItem level={2} icon={<I.script />}>PeriodConverter</TreeItem>
            </Tree>
            <BottomTabs $ml={7} $mr={3}>
              <ActiveTab $w={65}>Comune</ActiveTab>
              <SoftTab $w={66}>Preferiti</SoftTab>
            </BottomTabs>
          </Navigator>
        </LeftPanel>
        <RightCol>
          <Chart>
            <ChartTop>
              <Plot>
                <PlotSvg viewBox="0 0 1286 627" preserveAspectRatio="none">
                  <path d="M0 556.500H1286" stroke="#8f9397" strokeWidth="1" />
                  <path d="M1021 -1h12l-6 6z" fill="#9aa0a6" />
                  {candles.map(([x, hi, lo, top, bot, f]) => (
                    <Candle key={x} x={x / 3 - 1} hi={hi / 3 - 5} lo={lo / 3 - 5} top={top / 3 - 5} bot={bot / 3 - 5} filled={f} />
                  ))}
                  {tailCandles.map(([x, hi, lo, top, bot, f]) => (
                    <Candle key={x} x={1230 - 269 + x / 3} hi={505 + hi / 3} lo={505 + lo / 3} top={505 + top / 3} bot={505 + bot / 3} filled={f} />
                  ))}
                </PlotSvg>
                <ChartHeader><HeadTri />EURUSD.,M5&nbsp; 1.19542 1.19561 1.19542 1.19560</ChartHeader>
                <ChartNotes>received order #3: EURUSD.:TE0.05;0%5E-05<br />...waiting on channel 1...</ChartNotes>
              </Plot>
              <Axis>
                {ticks.map(t => <AxisTick key={t}>{t}</AxisTick>)}
                <PriceTag>1.19560</PriceTag>
              </Axis>
            </ChartTop>
            <TimeAxis>
              {times.map(t => <TimeLabel key={t}>{t}</TimeLabel>)}
            </TimeAxis>
            <ChartBase />
          </Chart>
          <ChartStrip>
            <SoftTab $w={89} $pl={11}>EURUSD.,M5</SoftTab>
            <SoftTab $w={87} $pl={10}>GER-10Y,M5</SoftTab>
            <ActiveTab $w={88}>EURUSD.,M5</ActiveTab>
            <StripArrows><span>‹</span><span>›</span></StripArrows>
          </ChartStrip>
        </RightCol>
      </Main>
      <Terminal>
        <TermSide>
          <CloseX>×</CloseX>
          <TermLabel>Terminale</TermLabel>
        </TermSide>
        <TermMain>
          <TermHead>
            {termCols.map(([t, w, left], i) => (
              <THCell key={i} $w={w} $left={left}>{t}</THCell>
            ))}
          </TermHead>
          <Balance>
            <BalDot />
            Saldo: 24 826.59 EUR  Controvalore: 24 826.59  Margine disponibile: 24 826.59
            <BalEnd>0.00</BalEnd>
          </Balance>
          <TermWhite />
          <BottomTabs $ml={2} $mr={4}>
            <ActiveTab $w={102}>Posizioni aperte</ActiveTab>
            {termTabs.map(([t, w, pl]) => (
              <SoftTab key={t} $w={w} $pl={pl}>{t}{t === "Casella postale" && <MailBadge>6</MailBadge>}</SoftTab>
            ))}
          </BottomTabs>
        </TermMain>
      </Terminal>
      <StatusBar>
        <SCell $w={907} $pl={2}>Per aiuto, premi F1</SCell>
        {statusCells.map((w, i) => (
          <SCell key={i} $w={w}>{i === 0 ? "Default" : ""}</SCell>
        ))}
        <SCell $w={130} $nb><I.signal />539/1 kb</SCell>
      </StatusBar>
      <Taskbar>
        <TaskSlot><I.win /></TaskSlot>
        <TaskSlot><I.circle /></TaskSlot>
        <TaskSlot><I.view /></TaskSlot>
        <TaskSlot><I.folder /></TaskSlot>
        <TaskSlot><I.ie /></TaskSlot>
        <TaskSlot><I.chrome /></TaskSlot>
        <TaskSlot><I.edge /></TaskSlot>
        <TaskSlot><I.office bg="#1f7a43" l="X" /></TaskSlot>
        <TaskSlot><I.office bg="#2a5699" l="W" /></TaskSlot>
        <TaskSlot><I.office bg="#0f6cbd" l="O" /></TaskSlot>
        <TaskSlot><I.calendar /></TaskSlot>
        <TaskSlot><I.calc /></TaskSlot>
        <TaskSlot><I.note /></TaskSlot>
        <TaskSlot $run><I.tv /></TaskSlot>
        <TaskSlot><I.skype /></TaskSlot>
        <TaskSlot $active $run><I.mtTask /></TaskSlot>
        <TaskSlot $run><I.nin /></TaskSlot>
        <TrayGroup>
          <TraySlot><I.tv /></TraySlot>
          <TraySlot><I.pause /></TraySlot>
          <TraySlot><I.eset /></TraySlot>
          <TraySlot><I.net /></TraySlot>
          <TraySlot><I.bt /></TraySlot>
          <TraySlot><I.usb /></TraySlot>
          <TraySlot><I.batt /></TraySlot>
          <TraySlot><I.wifi /></TraySlot>
          <TraySlot><I.speaker /></TraySlot>
          <Clock>08:35</Clock>
          <TraySlot $w={26}><I.notif /></TraySlot>
        </TrayGroup>
      </Taskbar>

      <BridgeWin>
        <BridgeTitle>Bridge settings<I.x s={12} c="#888" /></BridgeTitle>
        <BridgeBody>
          <TabRow>
            <DlgTab $w={64} $on>Instrument</DlgTab>
            <DlgTab $w={46}>Settings</DlgTab>
          </TabRow>
          <TabPanel>
            <Group $h={231}>
              <GroupLabel>Instrument Combo Settings</GroupLabel>
              <ComboGrid>
                <Table>
                  <TableRow $head $h={25}>
                    {tableCols.map((c, i) => <Cell key={i} $head>{c}</Cell>)}
                  </TableRow>
                  <TableRow $h={17}>{firstRow.map((c, i) => <Cell key={i}>{c}</Cell>)}</TableRow>
                  {[0,1,2,3,4,5,6].map(r => (
                    <TableRow key={r} $h={17}>{firstRow.map((_, i) => <Cell key={i} />)}</TableRow>
                  ))}
                </Table>
                <BtnCol>
                  <PlainBtn>Remove</PlainBtn>
                  <PlainBtn>Copy</PlainBtn>
                  <PlainBtn>Edit</PlainBtn>
                </BtnCol>
                <Inputs>{inputWidths.map((w, i) => <Input key={i} $w={w} />)}</Inputs>
                <AddBtn>Add</AddBtn>
                <GrayBar />
              </ComboGrid>
            </Group>
            <Group $h={55}>
              <GroupLabel>Instrument Combo</GroupLabel>
              <WarnRow>
                <Warn>Warning!&nbsp; Data a<span>e!</span></Warn>
                <BlueBtn $w={127} $h={20} $bold>Test Instrument</BlueBtn>
              </WarnRow>
            </Group>
          </TabPanel>
        </BridgeBody>
      </BridgeWin>

      <TestWin>
        <TestTitle>Test results<I.x s={11} c="#111" /></TestTitle>
        <TestBody>
          <InfoCircle />
          <div>
            <Heading>TEST RESULTS</Heading>
            <ResultRow><span>OK</span><span>Channel 1 is up and running</span></ResultRow>
            <ResultRow><span>OK</span><span>EURUSD. symbol found</span></ResultRow>
            <ResultRow><span>OK</span><span>Your size buttons pass min. size requirement</span></ResultRow>
            <ResultRow><span>Warning</span><span>{"MT4 Safety stop is turned off.\nIt is strongly advised to turn it on!"}</span></ResultRow>
            <ResultRow><span>Note</span><span>{"Tick size mismatch\nPlease review your stoploss and slippage settings\nif you haven't already!\nYou'll probably need to multiply futures ticklevels by 5\n(is forex/cfd symbol using pipettes?)"}</span></ResultRow>
          </div>
        </TestBody>
        <TestFooter><BlueBtn $w={86} $h={24}>OK</BlueBtn></TestFooter>
      </TestWin>
    </App>
  );
}
